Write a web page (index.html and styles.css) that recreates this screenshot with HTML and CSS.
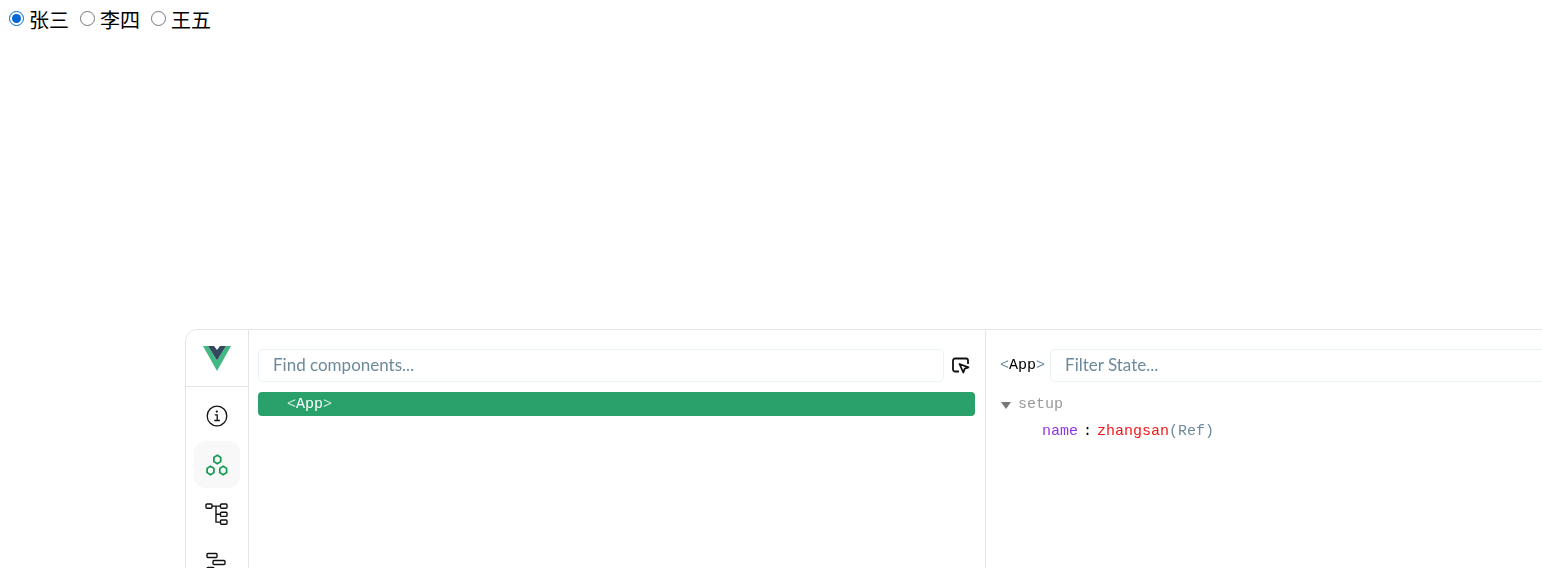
FILE: index.html
```html
<!DOCTYPE html>
<html lang="zh">
<head>
<meta charset="utf-8">
<title>Radio</title>
<link rel="stylesheet" href="styles.css">
</head>
<body>
<div class="radios">
  <label class="radio"><input type="radio" name="who" checked>张三</label>
  <label class="radio"><input type="radio" name="who">李四</label>
  <label class="radio"><input type="radio" name="who">王五</label>
</div>
<section class="devtools">
  <nav class="rail">
    <div class="logo">
      <svg width="28" height="25" viewBox="0 0 28 25"><path d="M0 0h5L14 14.500 23 0h5L14 25z" fill="#42b883"/><path d="M5 0h6l3 4 3-4h6l-9 14.500z" fill="#35495e"/></svg>
    </div>
    <div class="rail-items">
      <div class="rail-item">
        <svg width="22" height="22" viewBox="0 0 22 22" fill="none" stroke="#111" stroke-width="1.300"><circle cx="11" cy="11" r="9.800"/><path d="M8.800 9.800h2.400v5.700M8.300 15.500h5.600"/><circle cx="10.800" cy="6.600" r=".5" fill="#111"/></svg>
      </div>
      <div class="rail-item active">
        <svg width="22" height="22" viewBox="0 0 22 22" fill="none" stroke="#109a50" stroke-width="1.700"><path d="M11.300 1.300l3.400 2.100v4.200l-3.400 2.100-3.400-2.100V3.400z"/><path d="M4.500 12.300l3.400 2.100v4.200l-3.400 2.100-3.400-2.100v-4.200z"/><path d="M17.200 12.300l3.400 2.100v4.200l-3.400 2.100-3.400-2.100v-4.200z"/></svg>
      </div>
      <div class="rail-item">
        <svg width="24" height="24" viewBox="0 0 24 24" fill="none" stroke="#111" stroke-width="1.400"><rect x="1" y="2" width="6" height="4.200" rx="1"/><rect x="15.500" y="2" width="6.500" height="4.200" rx="1"/><rect x="15.500" y="10.200" width="6.500" height="4.200" rx="1"/><rect x="15.500" y="18" width="6.500" height="4.200" rx="1"/><path d="M7 4.100h8.500M11 4.100v16h4.500M11 12.300h4.500"/></svg>
      </div>
      <div class="rail-item">
        <svg width="24" height="24" viewBox="0 0 24 24" fill="none" stroke="#111" stroke-width="1.400"><rect x="2" y="2.500" width="10" height="4" rx="1"/><rect x="8" y="9.500" width="12" height="4" rx="1"/><rect x="2" y="16.500" width="7" height="4" rx="1"/></svg>
      </div>
    </div>
  </nav>
  <div class="tree-pane">
    <div class="search-row">
      <div class="field">Find components...</div>
      <svg class="picker" width="20" height="20" viewBox="0 0 20 20" fill="none" stroke="#111" stroke-width="1.800" stroke-linejoin="round"><path d="M8 15.500H4a2 2 0 0 1-2-2v-9a2 2 0 0 1 2-2h11a2 2 0 0 1 2 2V8"/><path d="M8.500 8l9 3.300-3.800 1.400-1.400 3.800z"/></svg>
    </div>
    <div class="node"><span class="angle">&lt;</span>App<span class="angle">&gt;</span></div>
  </div>
  <div class="state-pane">
    <div class="state-head">
      <span class="tag"><span class="tag-angle">&lt;</span>App<span class="tag-angle">&gt;</span></span>
      <div class="field">Filter State...</div>
    </div>
    <div class="section-title"><span class="caret"></span>setup</div>
    <div class="prop"><span class="key">name</span><span class="colon">:</span><span class="val">zhangsan</span><span class="ref">(Ref)</span></div>
  </div>
</section>
</body>
</html>
```

FILE: styles.css
```css
html, body {
  height: 100%;
  overflow: hidden;
}
body {
  margin: 8px;
  background: #fff;
  font-family: "Noto Sans CJK SC", "Liberation Sans", sans-serif;
  color: #000;
  font-size: 20px;
}
.radios {
  display: flex;
  align-items: center;
  height: 24px;
}
.radio {
  display: flex;
  align-items: center;
  line-height: 24px;
  margin-right: 10px;
}
.radio input {
  width: 15px;
  height: 15px;
  margin: -3px 5px 0 1px;
  accent-color: #0067d4;
}
.devtools {
  position: fixed;
  left: 185px;
  top: 329px;
  width: 1400px;
  height: 300px;
  display: flex;
  background: #fff;
  border: 1px solid #e5e5e5;
  border-radius: 12px;
  box-sizing: border-box;
}
.rail {
  width: 63px;
  flex: none;
  border-right: 1px solid #e5e5e5;
  box-sizing: border-box;
}
.logo {
  height: 57px;
  display: flex;
  align-items: center;
  justify-content: center;
  border-bottom: 1px solid #e5e5e5;
  box-sizing: border-box;
}
.rail-items {
  display: flex;
  flex-direction: column;
  align-items: center;
  gap: 2px;
  padding-top: 5px;
}
.rail-item {
  width: 46px;
  height: 47px;
  display: flex;
  align-items: center;
  justify-content: center;
  border-radius: 12px;
}
.rail-item.active {
  background: #f7f8f7;
}
.tree-pane {
  width: 737px;
  flex: none;
  padding: 19px 10px 0 9px;
  border-right: 1px solid #e5e5e5;
  box-sizing: border-box;
}
.search-row {
  display: flex;
  align-items: center;
  gap: 7px;
}
.field {
  flex: 1;
  height: 33px;
  line-height: 29px;
  padding-left: 14px;
  border: 1px solid #e9f3f1;
  border-radius: 5px;
  box-sizing: border-box;
  font-family: Lato, "Noto Sans", sans-serif;
  font-size: 17px;
  color: #6d8a9c;
}
.picker {
  flex: none;
  margin-right: 4px;
}
.node {
  height: 24px;
  margin-top: 10px;
  padding-left: 29px;
  background: #2aa06b;
  border-radius: 4px;
  color: #fff;
  font-family: "Liberation Mono", monospace;
  font-size: 15px;
  font-weight: 500;
  line-height: 26px;
}
.angle {
  color: #cdebdc;
}
.state-pane {
  flex: 1;
  padding: 19px 0 0 14px;
  box-sizing: border-box;
}
.state-head {
  display: flex;
  align-items: center;
  gap: 5px;
}
.tag {
  font-family: "Liberation Mono", monospace;
  font-size: 15px;
}
.tag-angle {
  color: #6d8a9c;
}
.section-title {
  display: flex;
  align-items: center;
  margin-top: 13px;
  height: 18px;
  font-family: "Liberation Mono", monospace;
  font-size: 15px;
  color: #999;
}
.caret {
  width: 0;
  height: 0;
  margin: 2px 7px 0 1px;
  border-left: 5.500px solid transparent;
  border-right: 5.500px solid transparent;
  border-top: 7px solid #777;
}
.prop {
  display: flex;
  margin-top: 9px;
  padding-left: 42px;
  height: 18px;
  line-height: 20px;
  font-family: "Liberation Mono", monospace;
  font-size: 15px;
}
.key {
  color: #9333ea;
}
.colon {
  margin: 0 5px 0 5px;
}
.val {
  color: #f01818;
}
.ref {
  color: #6d8a9c;
}
```
